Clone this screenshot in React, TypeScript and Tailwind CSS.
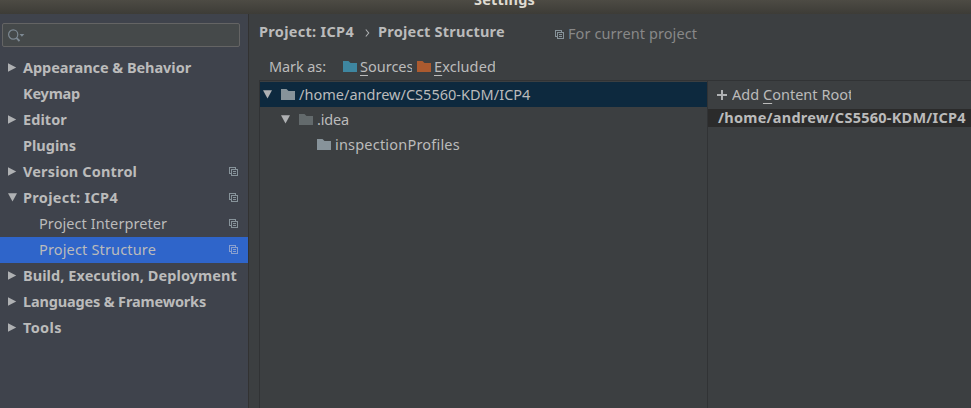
import type { ReactNode } from "react";

function ScopeIcon({ className = "text-[#87939a]" }: { className?: string }) {
  return (
    <svg width="10" height="10" viewBox="0 0 10 10" fill="none" stroke="currentColor" shapeRendering="crispEdges" className={`shrink-0 ${className}`}>
      <path d="M2 6.5H0.5V0.5H6.5V2" />
      <path d="M2.5 2.5H8.5V8.5H2.5ZM4 4.5H7M4 6.5H7" />
    </svg>
  );
}

function Arrow({ open }: { open?: boolean }) {
  return (
    <svg width="9" height="9" viewBox="0 0 9 9" fill="#afb1b3" className="shrink-0">
      {open ? <path d="M0 0.2H9L4.5 8.4Z" /> : <path d="M0 0.2L8.2 4.5L0 8.8Z" />}
    </svg>
  );
}

function Folder({ className }: { className: string }) {
  return (
    <svg width="14" height="11" viewBox="0 0 14 11" fill="currentColor" className={`shrink-0 ${className}`}>
      <path d="M0 0H5.5L7.5 2H14V11H0Z" />
    </svg>
  );
}

type RowProps = {
  label: string;
  spacing: string;
  arrow?: "open" | "closed";
  child?: boolean;
  scoped?: boolean;
  selected?: boolean;
};

const rows: RowProps[] = [
  { label: "Appearance & Behavior", spacing: "tracking-[-0.05px]", arrow: "closed" },
  { label: "Keymap", spacing: "tracking-[-0.2px]" },
  { label: "Editor", spacing: "tracking-[0.08px]", arrow: "closed" },
  { label: "Plugins", spacing: "tracking-[0px]" },
  { label: "Version Control", spacing: "tracking-[0.15px]", arrow: "closed", scoped: true },
  { label: "Project: ICP4", spacing: "tracking-[0.3px]", arrow: "open", scoped: true },
  { label: "Project Interpreter", spacing: "tracking-[0.08px]", child: true, scoped: true },
  { label: "Project Structure", spacing: "tracking-[0.16px]", child: true, scoped: true, selected: true },
  { label: "Build, Execution, Deployment", spacing: "tracking-[0.07px]", arrow: "closed" },
  { label: "Languages & Frameworks", spacing: "tracking-[-0.16px]", arrow: "closed" },
  { label: "Tools", spacing: "tracking-[0.35px]", arrow: "closed" },
];

function SidebarRow({ label, spacing, arrow, child, scoped, selected }: RowProps) {
  return (
    <div className={`flex h-[26px] items-center pr-[9px] pl-2 ${selected ? "bg-[#2f65ca]" : ""}`}>
      <span className={`-mt-px flex ${child ? "w-[31px]" : "w-[15px]"} shrink-0`}>
        {arrow && <Arrow open={arrow === "open"} />}
      </span>
      <span className={`grow pb-[2px] whitespace-nowrap ${spacing} ${child ? "" : "font-bold"}`}>{label}</span>
      {scoped && <ScopeIcon className={selected ? "text-[#8aa0cf]" : "text-[#87939a]"} />}
    </div>
  );
}

function Mnemonic({ children }: { children: ReactNode }) {
  return <span className="underline decoration-1 underline-offset-[3px]">{children}</span>;
}

export default function App() {
  return (
    <div className="flex h-[408px] w-[971px] flex-col overflow-hidden bg-[#3c3f41] font-['Noto_Sans','Open_Sans',sans-serif] text-[14.5px] leading-[20px] text-[#bbbbbb]">
      <div className="flex h-[14px] shrink-0 items-end overflow-hidden bg-linear-to-b from-[#4d4b44] to-[#3d3c37] pb-[5px] pl-[474px]">
        <span className="font-bold tracking-[0.2px] text-[#dfdbd2]">Settings</span>
      </div>
      <div className="flex min-h-0 grow">
        <div className="w-[249px] shrink-0 border-r border-[#323232] bg-[#3f434c]">
          <div className="mt-[9px] mr-2 ml-[2px] flex h-6 items-center rounded-[2px] border border-[#646464] bg-[#45494a] pl-[5px]">
            <svg width="17" height="13" viewBox="0 0 17 13" fill="none" stroke="#7d8993">
              <circle cx="5.2" cy="5.5" r="4.6" strokeWidth="1.2" />
              <path d="M8.4 8.8L11.5 12" strokeWidth="1.8" />
              <path d="M11.5 5H16.3L13.9 7.8Z" fill="#7d8993" stroke="none" />
            </svg>
          </div>
          <nav className="mt-2">
            {rows.map((row, i) => (
              <SidebarRow key={i} {...row} />
            ))}
          </nav>
        </div>
        <main className="flex min-w-0 grow flex-col pl-[10px]">
          <div className="flex h-[37px] shrink-0 items-center whitespace-nowrap">
            <span className="w-[95px] pb-[3px] font-bold tracking-[0.3px]">Project: ICP4</span>
            <svg width="5" height="8" viewBox="0 0 5 8" fill="none" stroke="#afb1b3" className="mt-px mr-[8px] ml-[11px]">
              <path d="M0.8 0.5L3.7 4L0.8 7.5" strokeWidth="1.1" />
            </svg>
            <span className="w-[177px] pb-[3px] font-bold tracking-[0.23px]">Project Structure</span>
            <ScopeIcon className="mt-[5px] text-[#87939a]" />
            <span className="mt-px ml-[3px] tracking-[0.09px] text-[#888888]">For current project</span>
          </div>
          <div className="flex h-[29px] shrink-0 items-center pl-[10px] whitespace-nowrap">
            <span className="w-[74px] tracking-[-0.1px]">Mark as:</span>
            <Folder className="mt-[2px] text-[#3e86a0]" />
            <span className="mt-px ml-[3px] w-[52px] overflow-hidden"><Mnemonic>S</Mnemonic>ources</span>
            <Folder className="mt-[2px] ml-[5px] text-[#ab5a2f]" />
            <span className="mt-px ml-[3px] w-[61px] overflow-hidden tracking-[0.1px]"><Mnemonic>E</Mnemonic>xcluded</span>
          </div>
          <div className="flex min-h-0 grow border-t border-l border-[#313335]">
            <div className="w-[448px] shrink-0 border-r border-[#313335] pt-px whitespace-nowrap">
              <div className="flex h-[25px] items-center bg-[#0d293e] pl-[3px]">
                <Arrow open />
                <Folder className="ml-[9px] text-[#87939a]" />
                <span className="ml-1 pb-[2px] tracking-[0.02px]">/home/andrew/CS5560-KDM/ICP4</span>
              </div>
              <div className="flex h-[25px] items-center pl-[21px]">
                <Arrow open />
                <Folder className="ml-[9px] text-[#636a6c]" />
                <span className="ml-1 pb-[2px] tracking-[-0.15px]">.idea</span>
              </div>
              <div className="flex h-[25px] items-center pl-[57px]">
                <Folder className="text-[#87939a]" />
                <span className="ml-1 pb-[2px] tracking-[0.2px]">inspectionProfiles</span>
              </div>
            </div>
            <div className="min-w-0 grow whitespace-nowrap">
              <div className="flex h-7 items-center pl-[9px]">
                <svg width="10" height="10" viewBox="0 0 10 10" stroke="#afb1b3" strokeWidth="2" className="shrink-0">
                  <path d="M0 5H10M5 0V10" />
                </svg>
                <span className="ml-[5px] w-[119px] overflow-hidden pb-[2px] tracking-[0.02px]">Add <Mnemonic>C</Mnemonic>ontent Root</span>
              </div>
              <div className="flex h-[18px] items-center bg-[#2b2b2b] pb-[2px] pl-[10px] font-bold tracking-[0.25px]">
                /home/andrew/CS5560-KDM/ICP4
              </div>
            </div>
          </div>
        </main>
      </div>
    </div>
  );
}
